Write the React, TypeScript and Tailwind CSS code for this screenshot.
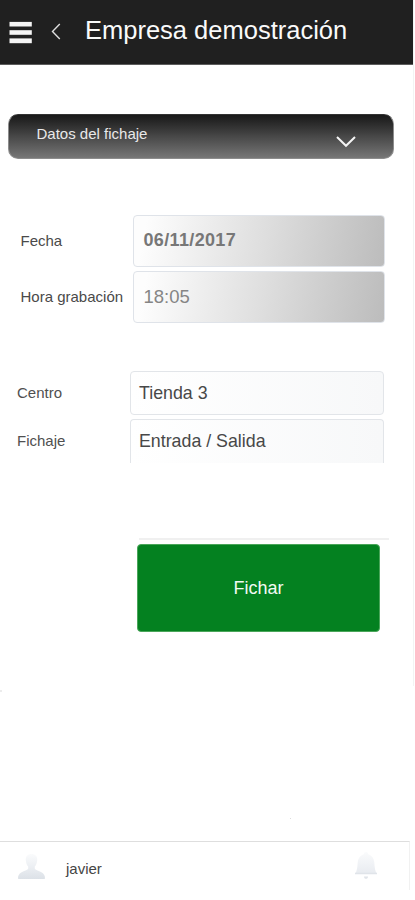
import React from 'react';

function MenuIcon() {
  return (
    <svg className="ml-[9px] mt-[21px] h-6 w-6 shrink-0" viewBox="0 0 24 24" fill="#f4f4f4">
      <rect x="0.5" y="0.9" width="22.3" height="4.6" />
      <rect x="0.5" y="9.2" width="22.3" height="4.6" />
      <rect x="0.5" y="17.4" width="22.3" height="4.8" />
    </svg>
  );
}

function Header() {
  return (
    <header className="flex h-[65px] w-[413px] items-start border-b border-[#5c5c5c] bg-[#202020]">
      <MenuIcon />
      <svg className="ml-[17px] mt-[23px] h-[17px] w-3 shrink-0" viewBox="0 0 12 17" fill="none" stroke="#dedede" strokeWidth="1.4">
        <path d="M9.8 1 2.5 8.4 9.8 15.9" />
      </svg>
      <h1 className="ml-[23px] mt-[14px] whitespace-nowrap text-[25.5px] leading-8 text-[#fafafa]">Empresa demostración</h1>
    </header>
  );
}

function SectionBar() {
  return (
    <button className="ml-2 mt-[49px] flex h-[45px] w-[386px] items-start justify-between rounded-[10px] border border-t-[#333] border-[#8d8d8d] bg-linear-to-b from-[#191919] via-[#484848] via-50% to-[#777] pl-[27.5px] pr-[37px]">
      <span className="mt-[9px] text-[15px] leading-5 text-[#e9e9e9]">Datos del fichaje</span>
      <svg className="mt-[21px] h-3 w-5" viewBox="0 0 20 12" fill="none" stroke="#f5f5f5" strokeWidth="2">
        <path d="m1 1 9 8.800L19 1" />
      </svg>
    </button>
  );
}

function ReadonlyRow({ label, value, bold }: { label: string; value: string; bold?: boolean }) {
  return (
    <div className="flex h-[52px] items-center">
      <span className="w-[112px] whitespace-nowrap text-[15px] text-[#4a4a4a]">{label}</span>
      <div className="flex h-full w-[252px] items-center rounded border border-[#dfe3e9] bg-linear-100 from-[#fdfdfd] from-5% via-[#dedede] via-52% to-[#bcbcbc] pl-[10px] pb-px">
        <span className={bold ? 'text-[18px] font-bold tracking-[0.35px] text-[#777]' : 'text-[18.5px] text-[#858585]'}>{value}</span>
      </div>
    </div>
  );
}

function SelectRow({ label, value, open }: { label: string; value: string; open?: boolean }) {
  return (
    <div className="flex h-[44px] items-center">
      <span className="w-[113px] pt-px text-[15px] text-[#505050]">{label}</span>
      <div
        className={
          'flex h-full w-[254px] items-center border border-[#e2e5e9] bg-linear-to-r from-white to-[#f7f8f9] pl-2 ' +
          (open ? 'rounded-t border-b-0' : 'rounded pt-px')
        }
      >
        <span className="text-[17.8px] text-[#484848]">{value}</span>
      </div>
    </div>
  );
}

function Footer() {
  return (
    <footer className="mt-[22px] flex h-[49px] w-[410px] items-start border-r border-t border-r-[#f1f1f1] border-t-[#dedede]">
      <svg className="ml-[17px] mt-[11px] h-[27px] w-[29px] shrink-0" viewBox="0 0 29 27">
        <defs>
          <linearGradient id="person" x1="0" y1="0" x2="0" y2="1">
            <stop offset="0" stopColor="#fafbfc" />
            <stop offset="0.5" stopColor="#eceff3" />
            <stop offset="1" stopColor="#dce1e7" />
          </linearGradient>
        </defs>
        <path
          fill="url(#person)"
          d="M14.5 1C10.5 1 8.600 3.400 8.800 7c.1 3 1.200 5.200 2.400 6.600v2.200c-1 1.400-4 2-6.600 3.400C2.200 20.500 1 22.500 1 25.200q0 .8.800.8h25.400q.8 0 .8-.8c0-2.700-1.200-4.700-3.600-6-2.600-1.400-5.600-2-6.600-3.400v-2.200c1.200-1.400 2.300-3.600 2.400-6.600.2-3.600-1.700-6-5.700-6Z"
        />
      </svg>
      <span className="ml-5 mt-[17px] text-[15px] leading-5 text-[#454545]">javier</span>
      <svg className="ml-auto mr-[31px] mt-[9px] h-[30px] w-6 shrink-0" viewBox="0 0 24 30">
        <defs>
          <linearGradient id="bell" x1="0" y1="0" x2="0" y2="1">
            <stop offset="0" stopColor="#fafbfc" />
            <stop offset="1" stopColor="#e8ebf0" />
          </linearGradient>
        </defs>
        <path fill="url(#bell)" d="M12 1c-1.300 0-2 .8-2 2-4 1.500-6 4.500-6.300 8.500-.3 5-.7 8.500-2.700 11.500h22c-2-3-2.400-6.500-2.700-11.500C20 7.500 18 4.500 14 3c0-1.200-.7-2-2-2Z" />
        <path fill="#e0e4e9" d="M1 21.800h22v1.500H1zM10 25.500h4c0 1.500-.8 2.300-2 2.300s-2-.8-2-2.300Z" />
      </svg>
    </footer>
  );
}

export default function App() {
  return (
    <div className="h-[900px] w-[415px] overflow-hidden bg-white font-['Liberation_Sans',Arial,sans-serif]">
      <div className="h-[686px] w-[414px] border-r border-[#f3f3f3]">
        <Header />
        <SectionBar />
        <section className="ml-[20.5px] mt-[56px] flex flex-col gap-1">
          <ReadonlyRow label="Fecha" value="06/11/2017" bold />
          <ReadonlyRow label="Hora grabación" value="18:05" />
        </section>
        <section className="ml-[17px] mt-12 flex flex-col gap-1">
          <SelectRow label="Centro" value="Tienda 3" />
          <SelectRow label="Fichaje" value="Entrada / Salida" open />
        </section>
        <div className="ml-[139px] mt-[75px] h-0.5 w-[250px] bg-[#f0f0f0]" />
        <button className="ml-[137px] mt-1 h-[88px] w-[243px] rounded border border-[#4aa65a] bg-[#048120] pt-px text-[18px] text-[#f2faf3]">
          Fichar
        </button>
      </div>
      <div className="mt-1 h-0.5 w-0.5 bg-[#ececec]" />
      <div className="ml-[290px] mt-[126px] h-px w-px bg-[#dcdcdc]" />
      <Footer />
    </div>
  );
}
